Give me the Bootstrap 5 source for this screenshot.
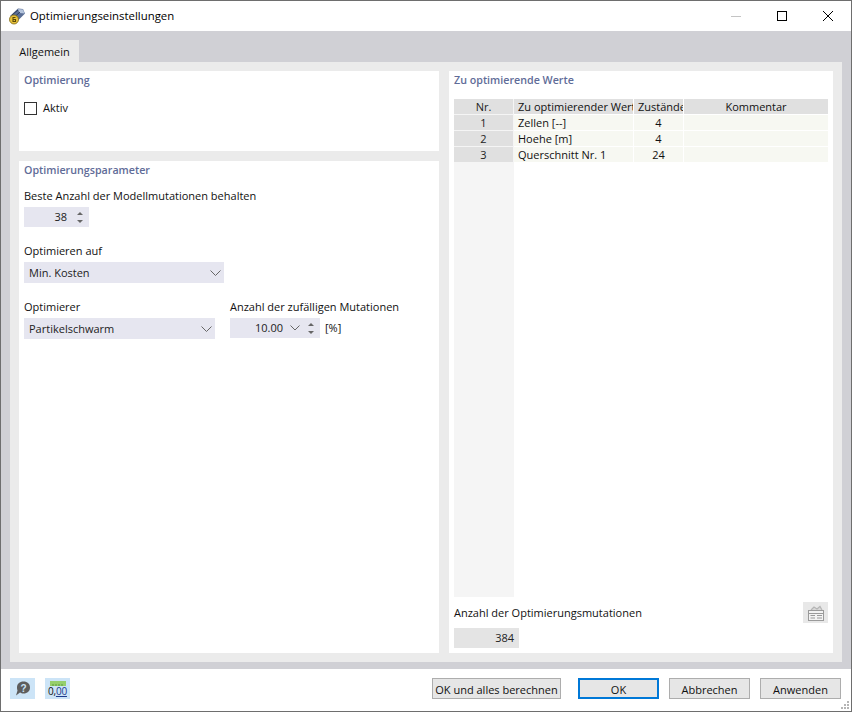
<!DOCTYPE html>
<html lang="de"><head><meta charset="utf-8"><title>Optimierungseinstellungen</title>
<link href="https://cdn.jsdelivr.net/npm/bootstrap@5.3.0/dist/css/bootstrap.min.css" rel="stylesheet">
<style>
html,body{margin:0;height:712px;overflow:hidden;background:#fff}
body{font:11px/16px "Open Sans","Noto Sans",sans-serif;color:#111}
.dlg{width:852px;height:712px;border:1px solid #6e6e6e;display:flex;flex-direction:column;position:relative}
.ttl{height:30px;flex:none;padding-left:7px}
.ttl-text{margin-left:4px;color:#000;font-size:11.4px}
.winbtns{margin-left:auto;display:flex;height:100%}
.winbtn{width:46px;height:100%;display:flex;align-items:center;justify-content:center}
.band{height:638px;flex:none;background:#d0d0d5;padding:9px 9px 7px}
.tabhead{width:69px;height:22px;background:#ebebeb;display:flex;align-items:center;justify-content:center;color:#111;padding-top:1px}
.pane{height:600px;background:#ebebeb;padding:9px;display:flex;gap:10px}
.colleft{width:420px;display:flex;flex-direction:column;gap:10px}
.box{background:#fff;padding:1px 5px}
.boxhead{color:#5f6c98;font-weight:600;height:16px;line-height:16px;font-size:10.7px}
.box1{height:80px}
.box2{flex:1}
.box3{width:384px;display:flex;flex-direction:column;padding-bottom:5px}
.chk{margin-top:12px;gap:6px}
.chkbox{width:13px;height:13px;border:1px solid #333;background:#fff;flex:none}
.fieldlab{height:16px;line-height:16px;color:#111}
.ctl{background:#e6e6f0;height:20px;display:flex;align-items:center;color:#1c1c1c}
.spinb{width:65px;justify-content:flex-end;margin-top:3px}
.arrows{width:18px;display:flex;flex-direction:column;align-items:center;gap:5px}
.combo{padding-left:5px;justify-content:space-between;padding-right:3px}
.wide1{width:200px;height:21px;margin-top:3px}
.wide2{width:191px;height:21px}
.mid{width:90px;justify-content:flex-end}
.tblwrap{display:flex;margin-top:11px;height:498px}
.stub{width:60px;background:#f5f5f5;flex:none}
.stubc{background:#e0e0e0;height:15px;margin-bottom:1px;text-align:center;line-height:15px;margin-right:1px;color:#222}
.gridtbl{flex:1;display:grid;grid-template-columns:119px 49px 144px;gap:1px;grid-auto-rows:15px;align-content:start}
.gh{background:#e0e0e0;line-height:15px;overflow:hidden;white-space:nowrap;padding:0 4px;color:#111}
.gc{background:#f7f8f2;line-height:15px;overflow:hidden;white-space:nowrap;padding:0 4px;color:#111}
.tc{text-align:center}
.mutrow{height:31px}
.tinybtn{width:25px;height:21px;background:#e8e8e8;margin-left:auto;display:flex;align-items:center;justify-content:center}
.readout{width:65px;height:20px;background:#e4e4e4;text-align:right;padding-right:5px;line-height:20px;color:#222}
.foot{flex:1;padding:9px 10px 0 9px}
.ficon{width:25px;height:21px;background:#cce4f7;display:flex;align-items:center;justify-content:center;margin-right:10px}
.dbtn{height:21px;background:#e6e6e6;border:1px solid #adadad;color:#111;display:flex;align-items:center;justify-content:center;width:81px;margin-left:10px;white-space:nowrap;padding-top:2px}
.dbtn-calc{width:129px;margin-left:0;margin-right:7px}
.dbtn-ok{border:2px solid #0078d7}
.grip{position:absolute;right:1px;bottom:1px;width:11px;height:11px}
</style></head><body>
<div class="dlg">
 <div class="ttl d-flex align-items-center">
  <svg width="18" height="18" viewBox="0 0 18 18"><path d="M2 9 L10 1.500 L15 2 L17 6.500 L10 13.500 Z" fill="#5b6f96"/><path d="M10 2 L15 2.500 L16.500 6.500 L11.500 6Z" fill="#b4c4dc"/><path d="M4 8 L10 3M6.500 10 L12 5" stroke="#2e3c58" stroke-width="1"/><circle cx="6" cy="12.500" r="4.500" fill="#e8c23a" stroke="#7a6512" stroke-width=".8"/><path d="M7.500 10.500 H5 V14.500 H7.500 V12.500 H5" fill="none" stroke="#5a4a08" stroke-width="1.100"/></svg>
  <span class="ttl-text">Optimierungseinstellungen</span>
  <div class="winbtns">
   <div class="winbtn"><svg width="10" height="10"><path d="M0 5.500H10" stroke="#c4c4c4"/></svg></div>
   <div class="winbtn"><svg width="10" height="10"><rect x=".5" y=".5" width="9" height="9" fill="none" stroke="#000"/></svg></div>
   <div class="winbtn"><svg width="10" height="10"><path d="M0 0L10 10M10 0L0 10" stroke="#000"/></svg></div>
  </div>
 </div>
 <div class="band">
  <div class="tabhead">Allgemein</div>
  <div class="pane">
   <div class="colleft">
    <div class="box box1">
     <div class="boxhead">Optimierung</div>
     <div class="d-flex align-items-center chk"><span class="chkbox"></span><span>Aktiv</span></div>
    </div>
    <div class="box box2">
     <div class="boxhead">Optimierungsparameter</div>
     <div class="fieldlab" style="margin-top:10px">Beste Anzahl der Modellmutationen behalten</div>
     <div class="ctl spinb"><span class="me-1">38</span><span class="arrows"><svg width="6" height="3" style="display:block"><path d="M3 0L6 3H0Z" fill="#666"/></svg><svg width="6" height="3" style="display:block"><path d="M0 0H6L3 3Z" fill="#666"/></svg></span></div>
     <div class="fieldlab" style="margin-top:16px">Optimieren auf</div>
     <div class="ctl combo wide1"><span>Min. Kosten</span><svg width="11" height="6"><path d="M.5 .5L5.500 5.500L10.500 .5" fill="none" stroke="#666"/></svg></div>
     <div class="d-flex" style="margin-top:16px;gap:15px">
      <div><div class="fieldlab">Optimierer</div><div class="ctl combo wide2" style="margin-top:3px"><span>Partikelschwarm</span><svg width="11" height="6"><path d="M.5 .5L5.500 5.500L10.500 .5" fill="none" stroke="#666"/></svg></div></div>
      <div><div class="fieldlab">Anzahl der zufälligen Mutationen</div>
       <div class="d-flex align-items-center" style="margin-top:3px;gap:5px"><div class="ctl mid"><span>10.00</span><svg style="margin-left:7px;margin-right:2px" width="10" height="6"><path d="M.5 .5L5 5L9.500 .5" fill="none" stroke="#666"/></svg><span class="arrows"><svg width="6" height="3" style="display:block"><path d="M3 0L6 3H0Z" fill="#666"/></svg><svg width="6" height="3" style="display:block"><path d="M0 0H6L3 3Z" fill="#666"/></svg></span></div><span>[%]</span></div>
      </div>
     </div>
    </div>
   </div>
   <div class="box box3">
    <div class="boxhead">Zu optimierende Werte</div>
    <div class="tblwrap">
     <div class="stub"><div class="stubc">Nr.</div><div class="stubc">1</div><div class="stubc">2</div><div class="stubc">3</div></div>
     <div class="gridtbl">
      <div class="gh">Zu optimierender Wert</div><div class="gh">Zustände</div><div class="gh tc">Kommentar</div>
      <div class="gc">Zellen [--]</div><div class="gc tc">4</div><div class="gc"></div>
      <div class="gc">Hoehe [m]</div><div class="gc tc">4</div><div class="gc"></div>
      <div class="gc">Querschnitt Nr. 1</div><div class="gc tc">24</div><div class="gc"></div>
     </div>
    </div>
    <div class="d-flex align-items-center mutrow"><span>Anzahl der Optimierungsmutationen</span><span class="tinybtn"><svg width="18" height="16" viewBox="0 0 18 16"><path d="M4 5L7 2L10 4L13 1.500L15 5" fill="#d8d8d8" stroke="#b5b5b5" stroke-width="1.200"/><rect x="1.500" y="5.500" width="15" height="10" fill="#f3f3f3" stroke="#9a9a9a"/><path d="M2 8.500H16M3.500 10.500H8M10 10.500H15M3.500 13H8M10 13H15" stroke="#9a9a9a"/></svg></span></div>
    <div class="readout">384</div>
   </div>
  </div>
 </div>
 <div class="foot d-flex">
  <div class="ficon"><svg width="18" height="17" viewBox="0 0 18 17"><path d="M9.500 1.500C13.500 1.500 16 4 16 7.500S13.500 13.500 9.500 13.500C8 13.500 7 13 6 12.500L2 15.500L3.500 10.500C3 9.500 3 8.500 3 7.500C3 4 5.500 1.500 9.500 1.500Z" fill="#5d5d5d"/><text x="9.500" y="11.500" font-size="10" font-weight="700" fill="#cce4f7" text-anchor="middle" font-family="Liberation Sans">?</text></svg></div>
  <div class="ficon flex-column"><svg width="16" height="5" style="display:block"><rect width="16" height="5" fill="#96cf6c"/><path d="M3 3V5M6 3V5M9 3V5M12 3V5" stroke="#5c9a3e"/></svg><span style="font-size:10px;line-height:11px;color:#111;letter-spacing:-.2px">0,<span class="text-decoration-underline" style="color:#1d3a8c">00</span></span></div>
  <div class="ms-auto d-flex">
   <div class="dbtn dbtn-calc">OK und alles berechnen</div>
   <div class="dbtn dbtn-ok">OK</div>
   <div class="dbtn">Abbrechen</div>
   <div class="dbtn">Anwenden</div>
  </div>
 </div>
 <svg class="grip" viewBox="0 0 11 11"><path d="M8 2h2v2H8zM5 5h2v2H5zM8 5h2v2H8zM2 8h2v2H2zM5 8h2v2H5zM8 8h2v2H8z" fill="#b5b5b5"/></svg>
</div>
<script src="https://cdn.jsdelivr.net/npm/bootstrap@5.3.0/dist/js/bootstrap.bundle.min.js"></script>
</body></html>
